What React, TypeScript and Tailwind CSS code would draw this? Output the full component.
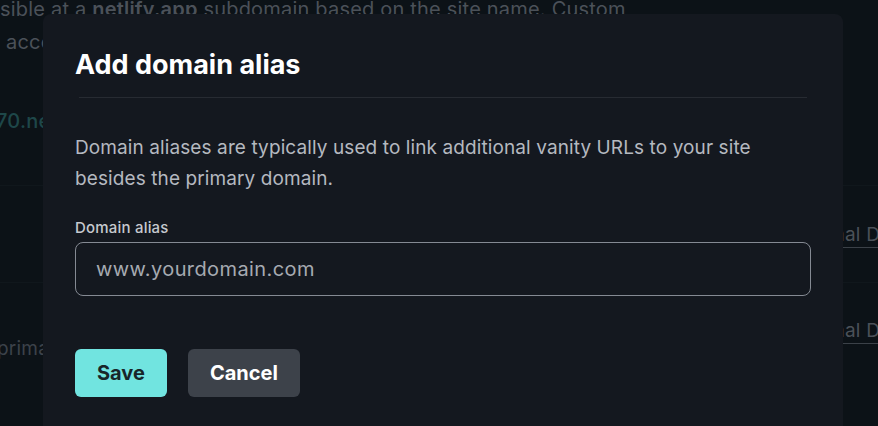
import React from 'react';

const BackgroundPage: React.FC = () => (
  <div className="flex flex-col text-[20px] leading-[33px] tracking-[0.2px] text-[#4b5159]">
    <p className="-mt-[7px] whitespace-nowrap">
      sible at a <b className="font-semibold">netlify.app</b> subdomain based on the site name. Custom
    </p>
    <p className="ml-[6px] whitespace-nowrap">accounts can add their own domains below.</p>

    <p className="-ml-[4px] mt-[46px] whitespace-nowrap font-medium text-[#1e4749]">
      70.netlify.app
    </p>

    <div className="-mr-[29px] mt-[47px] flex h-[97px] items-center justify-between border-t border-[#10171c] text-[19px]">
      <span className="ml-[60px] whitespace-nowrap">yourdomain.com</span>
      <a className="shrink-0 whitespace-nowrap underline decoration-[#3b4148] underline-offset-[6px]">
        External DNS
      </a>
    </div>

    <div className="-mr-[29px] flex h-[97px] items-center justify-between border-t border-[#10171c] text-[19px]">
      <div className="flex flex-col pt-[34px]">
        <span className="-ml-[3px] whitespace-nowrap text-[#3c424a]">primary domain</span>
      </div>
      <a className="-mt-[2px] shrink-0 whitespace-nowrap underline decoration-[#3b4148] underline-offset-[6px]">
        External DNS
      </a>
    </div>
  </div>
);

export default function App() {
  return (
    <div className="relative h-[426px] w-[878px] overflow-hidden bg-[#0c1217] font-['Inter',sans-serif]">
      <BackgroundPage />

      <div className="absolute left-[43px] top-[14px] w-[800px] rounded-lg bg-[#14181f] px-8 pb-10 pt-[35px]">
        <h2 className="text-[27px] font-bold leading-8 text-white">Add domain alias</h2>
        <div className="mx-1 mt-4 h-px bg-[#272b32]" />

        <p className="mt-[34px] text-[19px] leading-[31px] tracking-[0.1px] text-[#b5b9c0]">
          Domain aliases are typically used to link additional vanity URLs to your site besides the
          primary domain.
        </p>

        <label className="mt-6 block text-[15px] font-medium leading-5 tracking-[0.2px] text-[#c6c9ce]">
          Domain alias
        </label>
        <input
          type="text"
          placeholder="www.yourdomain.com"
          className="mt-1 h-[54px] w-full rounded-lg border border-[#858a93] bg-transparent px-5 text-[20px] tracking-[0.4px] text-white outline-none placeholder:text-[#a6aab1]"
        />

        <div className="mt-[53px] flex gap-[21px]">
          <button className="h-12 rounded-md bg-[#71e4e0] px-[22px] text-xl font-bold text-[#182629]">
            Save
          </button>
          <button className="h-12 rounded-md bg-[#3d424a] px-[22px] text-xl font-bold text-white">
            Cancel
          </button>
        </div>
      </div>
    </div>
  );
}
